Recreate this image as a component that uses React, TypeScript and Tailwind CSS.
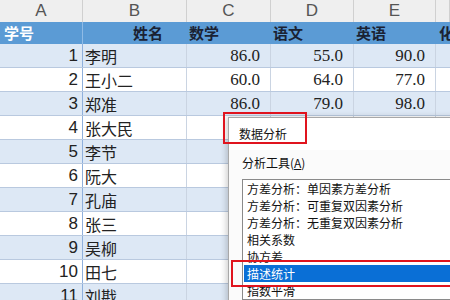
import { ReactNode } from "react";

const cols = ["A", "B", "C", "D", "E", ""];

const rows: { no: number; name: string; scores?: string[] }[] = [
  { no: 1, name: "李明", scores: ["86.0", "55.0", "90.0"] },
  { no: 2, name: "王小二", scores: ["60.0", "64.0", "77.0"] },
  { no: 3, name: "郑准", scores: ["86.0", "79.0", "98.0"] },
  { no: 4, name: "张大民" },
  { no: 5, name: "李节" },
  { no: 6, name: "阮大" },
  { no: 7, name: "孔庙" },
  { no: 8, name: "张三" },
  { no: 9, name: "吴柳" },
  { no: 10, name: "田七" },
  { no: 11, name: "刘戡" },
];

const tools = [
  "方差分析：单因素方差分析",
  "方差分析：可重复双因素分析",
  "方差分析：无重复双因素分析",
  "相关系数",
  "协方差",
  "描述统计",
  "指数平滑",
];

const grid = "grid grid-cols-[83px_104px_84px_83px_82px_1fr]";
const cjk = "font-['Noto_Sans_CJK_SC',sans-serif]";

const Cell = ({ className, children }: { className?: string; children?: ReactNode }) => (
  <div className={"flex items-center overflow-hidden whitespace-nowrap " + (className || "")}>{children}</div>
);

export default function App() {
  return (
    <div className="relative w-[450px] h-[300px] overflow-hidden bg-white">
      {/* column letters */}
      <div className={grid + " h-[22px] bg-[#efefef] text-[#555] text-[17px] font-['Liberation_Sans',sans-serif]"}>
        {cols.map((c, i) => (
          <Cell key={i} className="justify-center border-r border-[#d0d0d0]">
            {c}
          </Cell>
        ))}
      </div>

      {/* header row */}
      <div className={grid + " h-[22px] bg-[#5b9bd5] text-[15px] font-bold " + cjk}>
        <Cell className="pl-[4px] text-white border-r border-[#8fbbe6]">学号</Cell>
        <Cell className="justify-end pr-[24px] text-[#1a2233]">姓名</Cell>
        <Cell className="pl-[2px] text-[#1a2233]">数学</Cell>
        <Cell className="pl-[2px] text-[#1a2233]">语文</Cell>
        <Cell className="pl-[2px] text-[#1a2233]">英语</Cell>
        <Cell className="pl-[3px] text-[#1a2233]">化</Cell>
      </div>

      {/* data rows */}
      {rows.map((r) => (
        <div
          key={r.no}
          className={
            grid +
            " h-[24px] border-b border-[#b9c9df] text-[#222] " +
            (r.no % 2 === 1 ? "bg-[#dde8f5]" : "bg-white")
          }
        >
          <Cell className="justify-end pr-[4px] border-r border-[#8fb0dc] text-[17px] font-['Liberation_Sans',sans-serif]">
            {r.no}
          </Cell>
          <Cell className={"pl-[2px] border-r border-[#cad4e2] text-[16px] " + cjk}>{r.name}</Cell>
          {[0, 1, 2].map((k) => (
            <Cell
              key={k}
              className="justify-end pr-[10px] border-r border-[#cad4e2] text-[17px] font-['Liberation_Serif',serif]"
            >
              {r.scores ? r.scores[k] : ""}
            </Cell>
          ))}
          <Cell />
        </div>
      ))}

      {/* 数据分析 dialog */}
      <div
        className={
          "absolute left-[228px] top-[117px] w-[260px] h-[220px] bg-white border-l border-t border-[#a8a8a8] shadow-[-2px_0_6px_rgba(0,0,0,0.18)] text-[12px] text-[#111] " +
          cjk
        }
      >
        <div className="h-[32px] flex items-center pl-[10px]">数据分析</div>
        <div className="bg-[#fbfbfb] h-full pl-[13px] pt-[3px]">
          <div className="h-[20px] flex items-center">
            分析工具(<span className="underline">A</span>)
          </div>
          <div className="mt-[6px] bg-white border border-[#8a8a8a] pl-[1px]">
            {tools.map((t, i) => (
              <div
                key={t}
                className={
                  "h-[17px] flex items-center pl-[3px] whitespace-nowrap " +
                  (i === 5 ? "bg-[#0a6fd6] text-white" : "")
                }
              >
                {t}
              </div>
            ))}
          </div>
        </div>
      </div>

      {/* red highlight boxes */}
      <div className="absolute left-[223px] top-[112px] w-[84px] h-[32px] border-2 border-[#e0141e]" />
      <div className="absolute left-[231px] top-[260px] w-[240px] h-[27px] border-2 border-[#e0141e]" />
    </div>
  );
}
